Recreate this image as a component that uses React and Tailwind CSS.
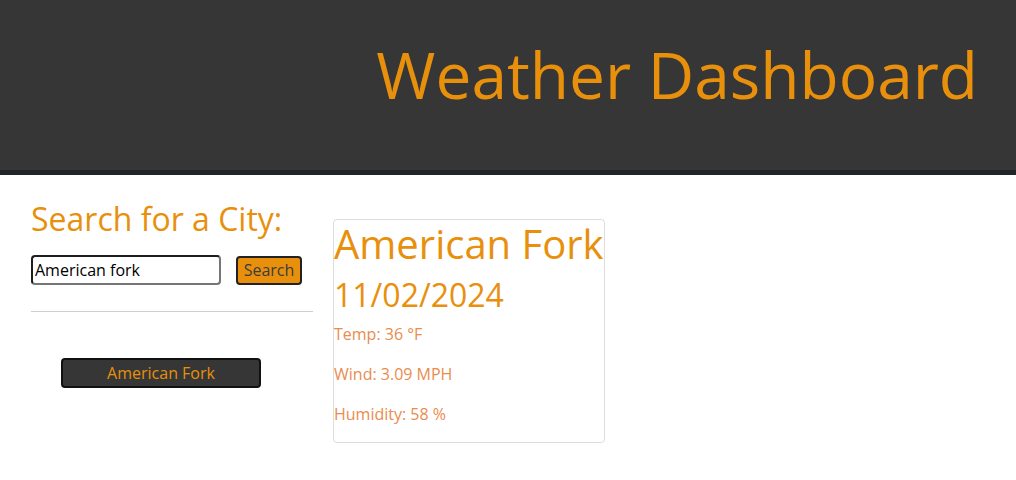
import React, { useState } from "react";

export default function App() {
  const [city, setCity] = useState("American fork");

  return (
    <div className="min-h-screen bg-white font-['Open_Sans',sans-serif]">
      {/* header */}
      <header className="h-[175px] bg-[#363636] border-b-[5px] border-[#212529] flex justify-end pr-[38px]">
        <h1 className="text-[64px] leading-[1.2] text-[#e8900c] mt-[37px]">Weather Dashboard</h1>
      </header>

      <div className="flex pl-[31px]">
        {/* search column */}
        <aside className="w-[282px] pt-[25px]">
          <h2 className="text-[32px] leading-[1.2] text-[#e8900c] mb-2">Search for a City:</h2>
          <form className="flex items-center gap-[15px] mt-[17px]" onSubmit={(e) => e.preventDefault()}>
            <input
              value={city}
              onChange={(e) => setCity(e.target.value)}
              className="w-[190px] h-[30px] px-[2px] text-[16px] text-black border-2 border-t-[#1e1e1e] border-l-[#1e1e1e] border-r-[#767676] border-b-[#767676] rounded-[4px] outline-none"
            />
            <button className="w-[66px] h-[29px] bg-[#e8900c] text-[#3c3c3c] text-[16px] border-2 border-[#222] rounded-[4px] leading-none">
              Search
            </button>
          </form>
          <hr className="mt-[26px] border-t border-[#cfcfcf]" />
          <div className="mt-[46px] pl-[30px]">
            <button className="w-[200px] h-[30px] bg-[#363636] text-[#e8900c] text-[16px] border-2 border-[#111] rounded-[4px] leading-none">
              American Fork
            </button>
          </div>
        </aside>

        {/* current weather card */}
        <section className="ml-[20px] mt-[44px]">
          <div className="w-fit border border-[#dddddd] rounded-[4px]">
            <h1 className="text-[40px] leading-[1.2] text-[#e8900c] mb-2">American Fork</h1>
            <h2 className="text-[32px] leading-[1.2] text-[#e8900c] mb-2">11/02/2024</h2>
            <p className="text-[16px] leading-6 text-[#e98c4e] mb-4">Temp: 36 °F</p>
            <p className="text-[16px] leading-6 text-[#e98c4e] mb-4">Wind: 3.09 MPH</p>
            <p className="text-[16px] leading-6 text-[#e98c4e] mb-4">Humidity: 58 %</p>
          </div>
        </section>
      </div>
    </div>
  );
}
